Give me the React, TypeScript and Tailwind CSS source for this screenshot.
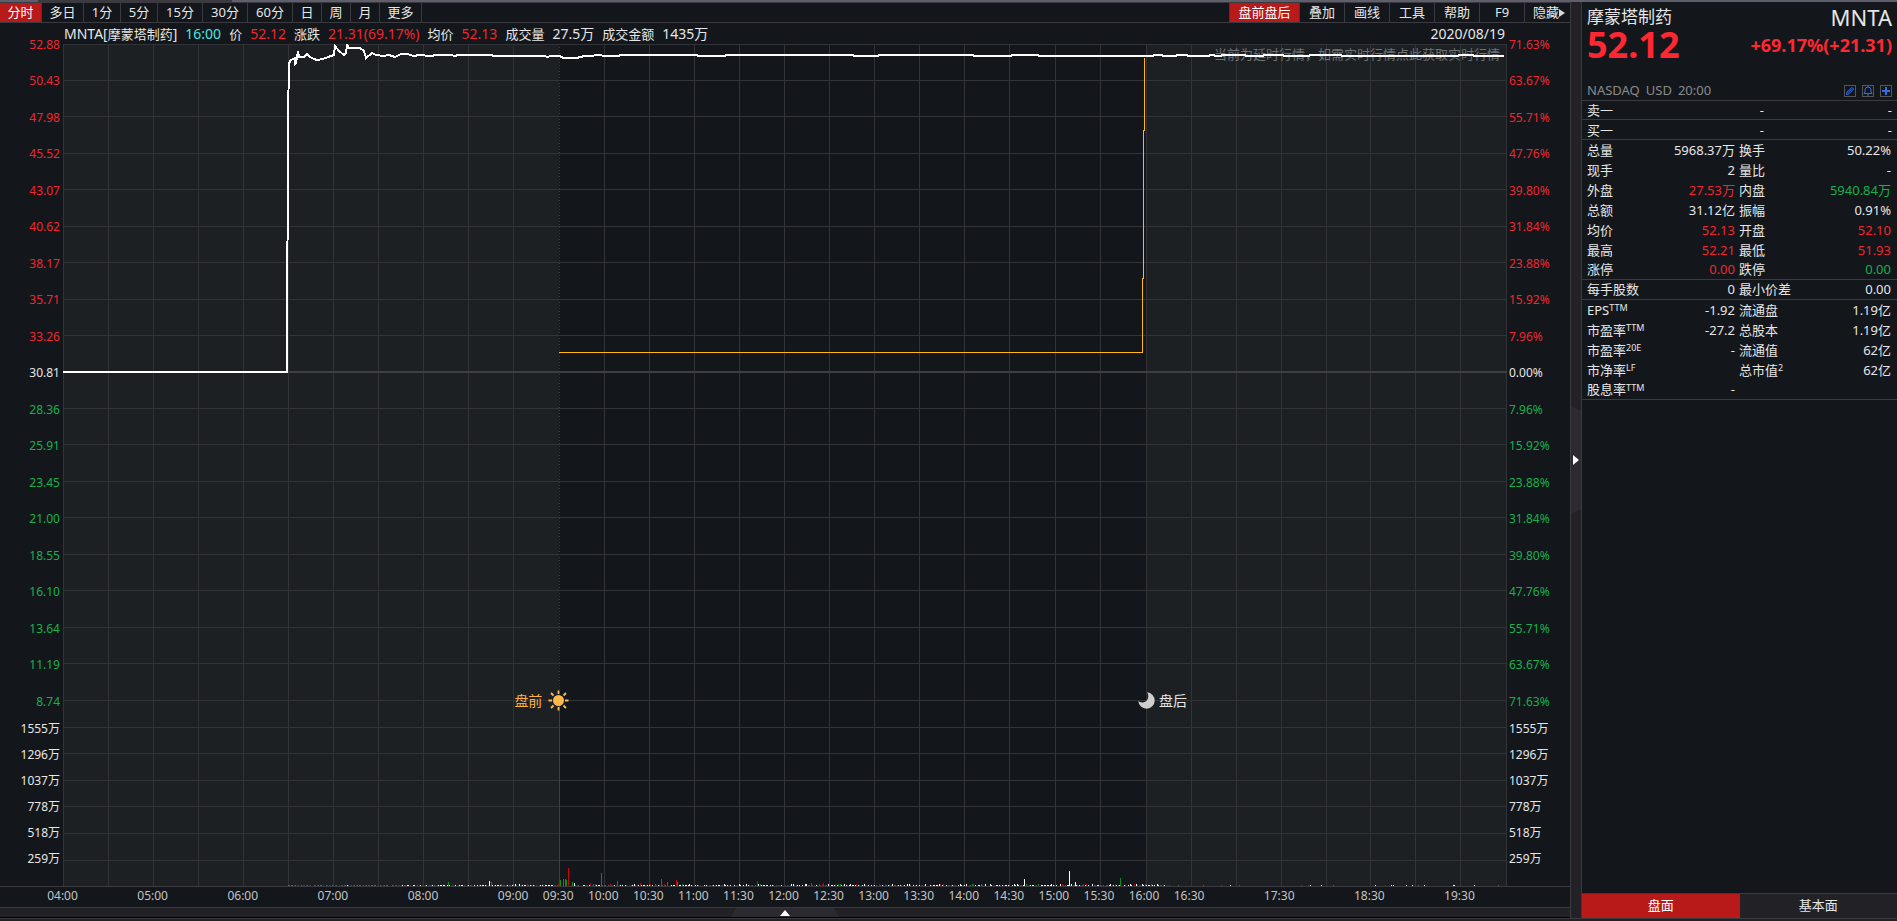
import React from "react";

const periods = [
  { label: "分时", width: "w-[42px]", active: true },
  { label: "多日", width: "w-[42px]" },
  { label: "1分", width: "w-[37px]" },
  { label: "5分", width: "w-[37px]" },
  { label: "15分", width: "w-[45px]" },
  { label: "30分", width: "w-[45px]" },
  { label: "60分", width: "w-[45px]" },
  { label: "日", width: "w-[29px]" },
  { label: "周", width: "w-[29px]" },
  { label: "月", width: "w-[29px]" },
  { label: "更多", width: "w-[42px]" },
];

const tools = ["叠加", "画线", "工具", "帮助", "F9"];

const prices = [
  "52.88", "50.43", "47.98", "45.52", "43.07", "40.62", "38.17", "35.71", "33.26", "30.81",
  "28.36", "25.91", "23.45", "21.00", "18.55", "16.10", "13.64", "11.19", "8.74",
];

const percents = [
  "71.63%", "63.67%", "55.71%", "47.76%", "39.80%", "31.84%", "23.88%", "15.92%", "7.96%", "0.00%",
  "7.96%", "15.92%", "23.88%", "31.84%", "39.80%", "47.76%", "55.71%", "63.67%", "71.63%",
];

const volumes = ["", "1555万", "1296万", "1037万", "778万", "518万", "259万", ""];

// one slot per half hour, 04:00 - 20:00
const times = [
  "04:00", "", "05:00", "", "06:00", "", "07:00", "", "08:00", "", "09:00",
  "09:30", "10:00", "10:30", "11:00", "11:30", "12:00", "12:30", "13:00", "13:30",
  "14:00", "14:30", "15:00", "15:30", "16:00", "16:30", "", "17:30", "", "18:30", "", "19:30", "",
];

const RED = "text-[#f0262e]";
const GREEN = "text-[#17b04c]";
const WHITE = "text-[#e6e6e6]";

const W = 1444;
const H = 842;
const PRICE_H = 656;

const priceLine =
  "0,328 224,328 225,74 226,19 228,16 230,15 232,14 232,20 233,19 235,7 236,13 238,13 241,13 244,10 247,13 251,15 254,16 260,15 265,13 271,11 272,2 276,7 281,11 283,9 284,1 286,4 297,4 301,7 303,14 305,12 307,11 309,9 313,11 320,12 326,11 332,13 338,10 345,10 350,12 357,11 361,11 363,12 370,12 371,11 389,11 391,12 396,11 429,11 430,12 482,12 484,13 488,12 497,12 500,14 513,14 518,13 521,12 530,12 532,11 545,12 556,12 557,11 634,11 635,12 662,12 663,11 790,11 791,12 815,12 816,11 910,11 911,12 948,12 949,11 975,11 976,12 1090,12 1091,11 1099,11 1100,12 1113,12 1114,11 1124,11 1125,12 1146,12 1147,11 1151,11 1152,12 1158,12 1159,11 1182,11 1183,12 1200,12 1201,11 1220,11 1221,12 1246,12 1247,11 1278,11 1279,12 1350,12 1380,12 1395,12 1396,11 1410,11 1411,12 1441,12";

const avgLine = "495,308 1079,308 1079,234 1080,234 1080,86 1081,86 1081,13";

const VOL_RED = "#c40808";
const VOL_GREEN = "#0c8f14";
const VOL_WHITE = "#ffffff";

const spikes = [
  { x: 385, h: 4, c: VOL_GREEN },
  { x: 426, h: 5, c: VOL_WHITE },
  { x: 428, h: 4, c: VOL_GREEN },
  { x: 497, h: 6, c: VOL_GREEN },
  { x: 500, h: 7, c: VOL_GREEN },
  { x: 502, h: 7, c: VOL_GREEN },
  { x: 503, h: 6, c: VOL_GREEN },
  { x: 505, h: 18, c: VOL_RED },
  { x: 509, h: 4, c: VOL_GREEN },
  { x: 511, h: 3, c: VOL_WHITE },
  { x: 527, h: 3, c: VOL_RED },
  { x: 538, h: 13, c: VOL_GREEN },
  { x: 554, h: 5, c: VOL_GREEN },
  { x: 577, h: 3, c: VOL_RED },
  { x: 598, h: 7, c: VOL_GREEN },
  { x: 604, h: 4, c: VOL_GREEN },
  { x: 613, h: 6, c: VOL_RED },
  { x: 614, h: 4, c: VOL_GREEN },
  { x: 694, h: 5, c: VOL_RED },
  { x: 748, h: 3, c: VOL_GREEN },
  { x: 760, h: 3, c: VOL_RED },
  { x: 961, h: 7, c: VOL_WHITE },
  { x: 1006, h: 15, c: VOL_WHITE },
  { x: 1012, h: 4, c: VOL_WHITE },
  { x: 1057, h: 8, c: VOL_GREEN },
];

function buildTicks() {
  const ticks: { x: number; h: number; c: string }[] = [];
  let seed = 7;
  const rand = () => {
    seed = (seed * 16807) % 2147483647;
    return seed / 2147483647;
  };
  for (let m = 150; m < 960; m++) {
    const x = Math.floor(m * 1.503);
    const skip = rand();
    const color = rand();
    const tall = rand();
    // after hours prints are sparse
    if (m > 735 && skip > 0.13) continue;
    if (m <= 735 && skip > 0.9) continue;
    const white = m < 225 ? 0.05 : 0.5;
    const c = color < white ? VOL_WHITE : color < white + (1 - white) / 2 ? VOL_RED : VOL_GREEN;
    ticks.push({ x, h: m > 280 && m < 735 && tall > 0.82 ? 2 : 1, c });
  }
  return ticks;
}

const ticks = buildTicks();

type Cell = { text: string; color?: string };
type Row = { a: string; supA?: string; av: Cell; b: string; supB?: string; bv: Cell; line?: boolean };

const quoteRows: Row[] = [
  { a: "总量", av: { text: "5968.37万" }, b: "换手", bv: { text: "50.22%" } },
  { a: "现手", av: { text: "2" }, b: "量比", bv: { text: "-" } },
  { a: "外盘", av: { text: "27.53万", color: RED }, b: "内盘", bv: { text: "5940.84万", color: GREEN } },
  { a: "总额", av: { text: "31.12亿" }, b: "振幅", bv: { text: "0.91%" } },
  { a: "均价", av: { text: "52.13", color: RED }, b: "开盘", bv: { text: "52.10", color: RED } },
  { a: "最高", av: { text: "52.21", color: RED }, b: "最低", bv: { text: "51.93", color: RED } },
  { a: "涨停", av: { text: "0.00", color: RED }, b: "跌停", bv: { text: "0.00", color: GREEN }, line: true },
  { a: "每手股数", av: { text: "0" }, b: "最小价差", bv: { text: "0.00" }, line: true },
  { a: "EPS", supA: "TTM", av: { text: "-1.92" }, b: "流通盘", bv: { text: "1.19亿" } },
  { a: "市盈率", supA: "TTM", av: { text: "-27.2" }, b: "总股本", bv: { text: "1.19亿" } },
  { a: "市盈率", supA: "20E", av: { text: "-" }, b: "流通值", bv: { text: "62亿" } },
  { a: "市净率", supA: "LF", av: { text: "" }, b: "总市值", supB: "2", bv: { text: "62亿" } },
  { a: "股息率", supA: "TTM", av: { text: "-" }, b: "", bv: { text: "" }, line: true },
];

function scaleColor(i: number) {
  if (i < 9) return RED;
  return i === 9 ? WHITE : GREEN;
}

function Scale({ labels, right }: { labels: string[]; right?: boolean }) {
  const align = right ? "items-start pl-[2px]" : "items-end pr-[3px]";
  return (
    <div className="flex w-[63px] shrink-0 flex-col text-xs">
      <div className={`flex flex-[658] flex-col justify-between ${align}`}>
        {labels.map((label, i) => (
          <div key={i} className={`flex h-px items-center ${scaleColor(i)}`}>
            {label}
          </div>
        ))}
      </div>
      <div className={`flex flex-[184] flex-col justify-between ${align}`}>
        {volumes.map((label, i) => (
          <div key={i} className="flex h-px items-center text-[#e6e6e6]">
            {label}
          </div>
        ))}
      </div>
    </div>
  );
}

function Toolbar() {
  return (
    <div className="flex h-[21px] shrink-0 justify-between border-y border-[#3a3a40] text-[13px] text-[#e6e6e6]">
      <div className="flex">
        {periods.map((p) => (
          <button
            key={p.label}
            className={`${p.width} border-r border-[#3a3a40] leading-[19px] ${p.active ? "bg-[#b81919] text-white" : ""}`}
          >
            {p.label}
          </button>
        ))}
      </div>
      <div className="flex">
        <button className="w-[71px] border-x border-[#3a3a40] bg-[#b81919] leading-[19px] text-white">盘前盘后</button>
        {tools.map((t) => (
          <button key={t} className="w-[45px] border-r border-[#3a3a40] leading-[19px]">
            {t}
          </button>
        ))}
        <button className="flex w-[45px] items-center justify-end pr-[5px] leading-[19px]">
          隐藏
          <svg width="6" height="8" viewBox="0 0 6 8">
            <path d="M0 0L6 4L0 8Z" fill="#d8d8d8" />
          </svg>
        </button>
      </div>
    </div>
  );
}

function InfoBar() {
  return (
    <div className="flex h-[21px] shrink-0 items-center justify-between pr-[65px] pl-16 text-[13px] whitespace-pre text-[#e6e6e6]">
      <div className="flex items-baseline gap-2">
        <span>
          <span className="text-[14px]">MNTA[</span>摩蒙塔制药<span className="text-[14px]">]</span>
        </span>
        <span className="text-[14px] text-[#48e8e0]">16:00</span>
        <span>价</span>
        <span className="text-[14px] text-[#f0262e]">52.12</span>
        <span>涨跌</span>
        <span className="text-[14px] text-[#f0262e]">21.31(69.17%)</span>
        <span>均价</span>
        <span className="text-[14px] text-[#f0262e]">52.13</span>
        <span>成交量</span>
        <span className="text-[14px]">27.5万</span>
        <span>成交金额</span>
        <span className="text-[14px]">1435万</span>
      </div>
      <span className="text-[14px]">2020/08/19</span>
    </div>
  );
}

function Plot() {
  const cols = Array.from({ length: 33 }, (_, i) => i);
  const volRows = [1, 2, 3, 4, 5, 6];
  return (
    <div className="relative min-w-0 flex-1">
      <svg
        className="absolute inset-0 h-full w-full"
        viewBox={`0 0 ${W} ${H}`}
        preserveAspectRatio="none"
        shapeRendering="crispEdges"
      >
        <rect x="0" y="0" width="496" height={H} fill="#1c2023" />
        <rect x="1083" y="0" width="361" height={H} fill="#1c2023" />
        {cols.map((i) => {
          const x = Math.floor((i * 1443) / 32) + (i > 23 && i < 29 ? 1 : 0);
          if (i === 11) {
            return <path key={i} d={`M${x + 0.5} 0V${PRICE_H}`} stroke="#3a3d40" strokeDasharray="1 2" />;
          }
          return <rect key={i} x={x} y="0" width="1" height={H} fill="#313336" />;
        })}
        {prices.map((p, i) => (
          <rect
            key={p}
            x="0"
            y={Math.floor((i * PRICE_H) / 18) - (i === 9 ? 1 : 0)}
            width={W}
            height={i === 9 ? 2 : 1}
            fill={i === 9 ? "#3c3e40" : "#313336"}
          />
        ))}
        {volRows.map((i) => (
          <rect key={i} x="0" y={Math.round(PRICE_H + i * 26.6)} width={W} height="1" fill="#313336" />
        ))}
      </svg>

      <a href="#realtime" className="absolute top-px right-[7px] text-[13px] leading-[19px] text-[#707274]">
        当前为延时行情，如需实时行情点此获取实时行情
      </a>

      <svg
        className="pointer-events-none absolute inset-0 h-full w-full"
        viewBox={`0 0 ${W} ${H}`}
        preserveAspectRatio="none"
        shapeRendering="crispEdges"
      >
        <g transform="translate(0.5 0.5)">
          <polyline points={avgLine} fill="none" stroke="#ffb90f" strokeWidth="1" />
        </g>
        <polyline points={priceLine} fill="none" stroke="#ffffff" strokeWidth="2" />
        <rect x="496" y={PRICE_H} width="1" height={H - PRICE_H} fill="#c40808" />
        {ticks.map((t, i) => (
          <rect key={i} x={t.x} y={H - t.h} width="1" height={t.h} fill={t.c} />
        ))}
        {spikes.map((t, i) => (
          <rect key={i} x={t.x} y={H - t.h} width="1" height={t.h} fill={t.c} />
        ))}
      </svg>

      {/* session markers */}
      <div className="absolute top-[78%] left-[34.375%] flex -translate-y-1/2 items-center">
        <span className="absolute right-[17px] text-[14px] whitespace-nowrap text-[#ffb13c]">盘前</span>
        <svg className="absolute -left-[11px]" width="21" height="21" viewBox="0 0 21 21">
          <circle cx="10.5" cy="10.5" r="5.5" fill="#ffb74a" />
          <path
            d="M10.5 0.5V4M10.5 17V20.5M0.5 10.5H4M17 10.5H20.5M3 3L5.5 5.5M15.5 15.5L18 18M18 3L15.5 5.5M5.5 15.5L3 18"
            stroke="#ffb74a"
            strokeWidth="1.8"
          />
        </svg>
      </div>
      <div className="absolute top-[78%] left-3/4 flex -translate-y-1/2 items-center">
        <svg className="absolute -left-2" width="17" height="17" viewBox="0 0 17 17">
          <path d="M9 0.3A8.2 8.2 0 1 1 0.3 9C2 10.6 5 11 7.6 9.6C10.5 8 11.2 3 9 0.3Z" fill="#cfcfcf" />
        </svg>
        <span className="absolute left-[13px] text-[14px] whitespace-nowrap text-[#e6e6e6]">盘后</span>
      </div>
    </div>
  );
}

function QuotePanel() {
  const icon = "flex size-3 items-center justify-center border border-[#55565a] text-[#2f6fe8]";
  return (
    <aside className="flex w-[315px] shrink-0 flex-col">
      <div className="flex h-[98px] flex-col px-[5px]">
        <div className="flex h-[29px] items-center justify-between text-[#e6e6e6]">
          <h1 className="text-[17px] leading-6">摩蒙塔制药</h1>
          <span className="text-[22px] leading-6">MNTA</span>
        </div>
        <div className="flex h-7 items-center justify-between leading-7 font-bold text-[#ff2832]">
          <span className="text-[36px] leading-7">52.12</span>
          <span className="text-[18px] leading-7">+69.17%(+21.31)</span>
        </div>
        <div className="mt-auto flex h-[19px] items-center justify-between text-[13px] text-[#8a8b8d]">
          <span className="flex gap-[6px]">
            <span>NASDAQ</span>
            <span>USD</span>
            <span>20:00</span>
          </span>
          <span className="flex gap-[6px]">
            <button aria-label="编辑" className={icon}>
              <svg width="10" height="10" viewBox="0 0 10 10" fill="none" stroke="currentColor">
                <path d="M1.5 8.5L2.2 6L6.8 1.4L8.6 3.2L4 7.8Z M3 6.8L7.2 2.6" />
              </svg>
            </button>
            <button aria-label="提醒" className={icon}>
              <svg width="10" height="10" viewBox="0 0 10 10" fill="none" stroke="currentColor">
                <path d="M1 7.5H9L8 6V4A3 3 0 0 0 2 4V6Z M4 9H6 M5 0V1" />
              </svg>
            </button>
            <button aria-label="添加" className={icon}>
              <svg width="10" height="10" viewBox="0 0 10 10" stroke="currentColor" strokeWidth="2">
                <path d="M5 1V9M1 5H9" />
              </svg>
            </button>
          </span>
        </div>
      </div>

      <table className="w-full table-fixed border-separate border-spacing-0 border-t border-[#3a3a40] text-[13px] leading-[18px] text-[#e6e6e6]">
        <tbody>
          {["卖一", "买一"].map((name, i) => {
            const cell = `border-b border-[#3a3a40] p-0 ${i === 0 ? "h-[19px]" : "h-5"}`;
            return (
              <tr key={name}>
                <th className={`${cell} w-[70px] pl-[5px] text-left font-normal`}>{name}</th>
                <td className={`${cell} w-[112px] text-right`}>-</td>
                <td className={`${cell} pr-[5px] text-right`}>-</td>
              </tr>
            );
          })}
        </tbody>
      </table>

      <table className="w-full table-fixed border-separate border-spacing-0 text-[13px] leading-[19px] text-[#e6e6e6]">
        <tbody>
          {quoteRows.map((r, i) => {
            const line = r.line ? "border-b border-[#3a3a40]" : "";
            return (
              <tr key={i}>
                <th className={`h-5 w-[70px] p-0 pl-[5px] text-left font-normal whitespace-nowrap ${line}`}>
                  <span className="flex items-center">
                    {r.a}
                    {r.supA && <span className="mb-1 text-[9px] leading-[10px]">{r.supA}</span>}
                  </span>
                </th>
                <td className={`h-5 w-[84px] p-0 pr-px text-right ${r.av.color || ""} ${line}`}>{r.av.text}</td>
                <th className={`h-5 w-[66px] p-0 pl-[3px] text-left font-normal whitespace-nowrap ${line}`}>
                  <span className="flex items-center">
                    {r.b}
                    {r.supB && <span className="mb-1 text-[9px] leading-[10px]">{r.supB}</span>}
                  </span>
                </th>
                <td className={`h-5 p-0 pr-[6px] text-right ${r.bv.color || ""} ${line}`}>{r.bv.text}</td>
              </tr>
            );
          })}
        </tbody>
      </table>

      <div className="mt-auto flex h-[25px] border-t border-[#3a3a40] text-[13px]">
        <button className="flex-1 bg-[#b81919] text-white">盘面</button>
        <button className="flex-1 bg-[#222126] text-[#e6e6e6]">基本面</button>
      </div>
    </aside>
  );
}

export default function App() {
  return (
    <div className="flex h-screen flex-col bg-[#13171b] font-['Noto_Sans','Noto_Sans_CJK_SC',sans-serif]">
      <div className="flex h-[2px] shrink-0 bg-[#5f5f6b]">
        <div className="ml-[38px] w-[194px] bg-[#3a3a3f]" />
      </div>

      <div className="flex min-h-0 flex-1">
        <main className="flex min-w-0 flex-1 flex-col">
          <Toolbar />
          <InfoBar />
          <div className="flex min-h-0 flex-1">
            <Scale labels={prices} />
            <Plot />
            <Scale labels={percents} right />
          </div>
          <div className="flex h-[21px] shrink-0 justify-between border-t border-[#3a3a40] pr-[65px] pb-[2px] pl-[62px] text-xs text-[#c4c4c4]">
            {times.map((t, i) => (
              <div key={i} className="flex w-px items-center justify-center">
                {t}
              </div>
            ))}
          </div>
          <div className="flex h-[11px] shrink-0 justify-center border-t border-b border-t-[#3a3a40] border-b-black bg-[#222126]">
            <button aria-label="展开" className="h-[9px]">
              <svg width="108" height="9" viewBox="0 0 108 9">
                <path d="M5 0H103L108 9H0Z" fill="#2b2a30" />
                <path d="M54 2L59 8H49Z" fill="#ffffff" />
              </svg>
            </button>
          </div>
        </main>

        <div className="flex w-3 shrink-0 items-center border-x border-[#3a3a40] bg-[#222126]">
          <button aria-label="收起" className="w-[10px]">
            <svg width="10" height="108" viewBox="0 0 10 108">
              <path d="M0 0L10 5V103L0 108Z" fill="#2b2a30" />
              <path d="M2 49L8 54L2 59Z" fill="#ffffff" />
            </svg>
          </button>
        </div>

        <QuotePanel />
      </div>

      <div className="h-[3px] shrink-0 border-t border-[#3a3a40] bg-[#222126]" />
    </div>
  );
}
